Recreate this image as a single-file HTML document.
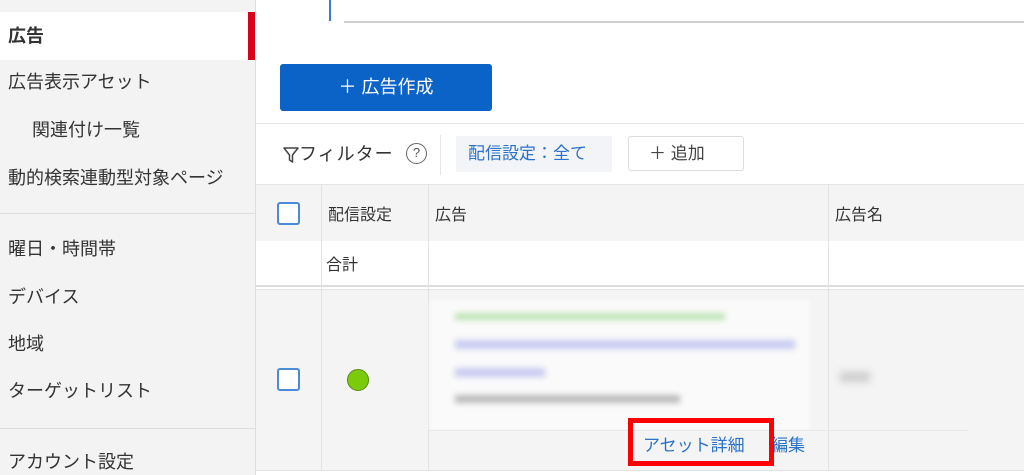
<!DOCTYPE html>
<html><head><meta charset="utf-8"><style>
*{margin:0;padding:0;box-sizing:border-box}
body{width:1024px;height:475px;overflow:hidden;position:relative;background:#fff;font-family:"Liberation Sans","Noto Sans CJK JP",sans-serif;color:#333;font-size:17px}
.a{position:absolute}
.side{left:0;top:0;width:256px;height:475px;background:#f3f3f3;border-right:1px solid #ddd}
.it{position:absolute;left:8px;font-size:18px;color:#333;line-height:24px}
.cb{position:absolute;width:23px;height:23px;border:2px solid #4a8ad6;border-radius:3px;background:#fff}
.vl{position:absolute;width:1px;background:#e2e2e2}
</style></head><body>
<div class="a side"></div>
<div class="a" style="left:0;top:12px;width:256px;height:48px;background:#fff"></div>
<div class="a" style="left:248px;top:12px;width:7px;height:48px;background:#d9001b"></div>
<div class="it" style="top:24px;font-weight:bold">広告</div>
<div class="it" style="top:70px">広告表示アセット</div>
<div class="it" style="top:118px;left:32px">関連付け一覧</div>
<div class="it" style="top:166px">動的検索連動型対象ページ</div>
<div class="a" style="left:0;top:213px;width:255px;height:1px;background:#ddd"></div>
<div class="it" style="top:237px">曜日・時間帯</div>
<div class="it" style="top:285px">デバイス</div>
<div class="it" style="top:332px">地域</div>
<div class="it" style="top:379px">ターゲットリスト</div>
<div class="a" style="left:0;top:428px;width:255px;height:1px;background:#ddd"></div>
<div class="it" style="top:450px">アカウント設定</div>

<div class="a" style="left:329px;top:0;width:2px;height:21px;background:#3c7dd0"></div>
<div class="a" style="left:344px;top:21px;width:680px;height:2px;background:#cfcfcf"></div>
<div class="a" style="left:280px;top:64px;width:212px;height:47px;background:#0b63c7;border-radius:3px;color:#fff;font-size:18px;line-height:47px;text-align:center">＋ 広告作成</div>
<div class="a" style="left:256px;top:123px;width:768px;height:1px;background:#e6e6e6"></div>
<svg class="a" style="left:283px;top:146px" width="16" height="18" viewBox="0 0 16 18"><path d="M1 2H15L9.5 9V16L6.5 14V9Z" fill="none" stroke="#444" stroke-width="1.5" stroke-linejoin="round"/></svg>
<div class="a" style="left:299px;top:142px;font-size:18px;line-height:24px;letter-spacing:1px">フィルター</div>
<div class="a" style="left:406px;top:143px;width:21px;height:21px;border:1.5px solid #666;border-radius:50%;font-size:13px;line-height:18px;text-align:center;color:#555">?</div>
<div class="a" style="left:440px;top:135px;width:1px;height:40px;background:#e6e6e6"></div>
<div class="a" style="left:456px;top:136px;width:156px;height:36px;background:#f2f4f7;color:#2b72c8;font-size:17px;line-height:36px;padding-left:12px">配信設定：全て</div>
<div class="a" style="left:628px;top:136px;width:116px;height:35px;border:1px solid #ddd;border-radius:3px;font-size:17px;line-height:33px;padding-left:20px;color:#444">＋ 追加</div>

<div class="a" style="left:256px;top:184px;width:768px;height:57px;background:#f4f4f4;border-top:1px solid #e4e4e4"></div>
<div class="a" style="left:256px;top:285px;width:768px;height:5px;border-top:2px solid #ddd;border-bottom:1px solid #e4e4e4"></div>
<div class="a" style="left:256px;top:290px;width:768px;height:180px;background:#f4f4f4"></div>
<div class="a" style="left:256px;top:470px;width:768px;height:5px;background:#fff;border-top:1px solid #e2e2e2"></div>
<div class="vl" style="left:321px;top:184px;height:286px"></div>
<div class="vl" style="left:428px;top:184px;height:286px"></div>
<div class="vl" style="left:828px;top:184px;height:286px"></div>
<div class="cb" style="left:277px;top:202px"></div>
<div class="a" style="left:328px;top:201px;font-size:16px">配信設定</div>
<div class="a" style="left:435px;top:201px;font-size:16px">広告</div>
<div class="a" style="left:835px;top:201px;font-size:16px">広告名</div>
<div class="a" style="left:326px;top:251px;font-size:16px">合計</div>

<div class="a" style="left:430px;top:300px;width:380px;height:130px;background:#fafafa;filter:blur(2px)"></div>
<div class="a" style="left:455px;top:313px;width:270px;height:7px;background:#bfe3b6;filter:blur(3px)"></div>
<div class="a" style="left:455px;top:340px;width:340px;height:9px;background:#c9cbf1;filter:blur(3px)"></div>
<div class="a" style="left:455px;top:368px;width:90px;height:9px;background:#c9cbf1;filter:blur(3px)"></div>
<div class="a" style="left:455px;top:395px;width:225px;height:8px;background:#bbb;filter:blur(3px)"></div>
<div class="a" style="left:840px;top:372px;width:30px;height:10px;background:#ccc;filter:blur(4px)"></div>
<div class="a" style="left:428px;top:430px;width:540px;height:1px;background:#e8e8e8"></div>
<div class="cb" style="left:277px;top:368px"></div>
<div class="a" style="left:347px;top:369px;width:22px;height:22px;border-radius:50%;background:#7ccb0b;border:1px solid #5c8a14"></div>
<div class="a" style="left:643px;top:431px;font-size:17px;color:#2b72c8">アセット詳細</div>
<div class="a" style="left:771px;top:431px;font-size:17px;color:#2b72c8">編集</div>
<div class="a" style="left:628px;top:418px;width:146px;height:48px;border:5px solid #f00"></div>
</body></html>
